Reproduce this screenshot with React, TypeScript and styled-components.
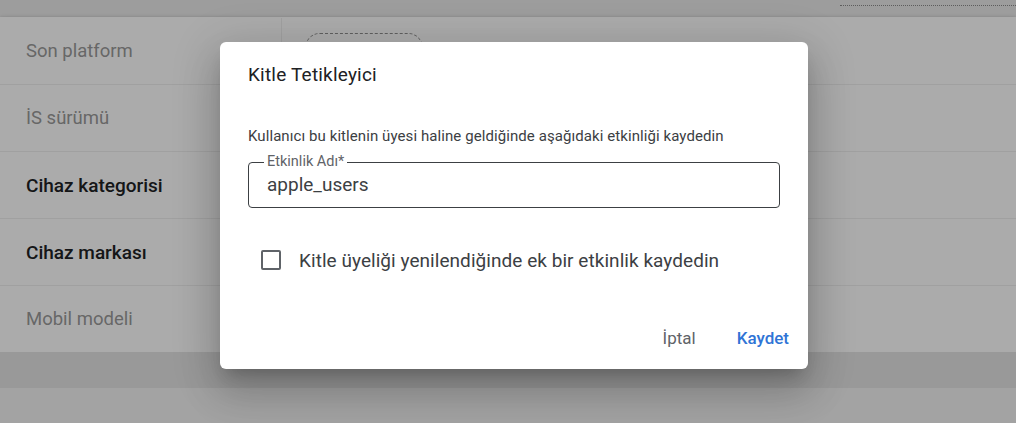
import * as React from 'react';
import styled, { createGlobalStyle } from 'styled-components';

const GlobalStyle = createGlobalStyle`
    html, body {
        margin: 0;
        padding: 0;
        width: 1016px;
        height: 423px;
        overflow: hidden;
        background: #f1f1f1;
        font-family: Roboto, "Noto Sans", Arial, sans-serif;
    }
`;

const Page = styled.div`
    position: relative;
    width: 1016px;
    height: 423px;
    display: flex;
    flex-direction: column;
`;

const TopBand = styled.div`
    height: 17px;
    background: #e8e8e8;
    display: flex;
    justify-content: flex-end;
`;

const DottedRule = styled.div`
    width: 176px;
    height: 5px;
    border-bottom: 1px dotted #8a8a8a;
`;

const Card = styled.div`
    background: #fdfdfd;
    box-shadow: 0 1px 3px rgba(0, 0, 0, 0.25), 0 2px 8px rgba(0, 0, 0, 0.12);
    display: flex;
    flex-direction: column;
`;

const Row = styled.div<{ $first?: boolean }>`
    display: grid;
    grid-template-columns: 282px 1fr;
    height: 67px;
    border-top: 1px solid ${p => (p.$first ? 'transparent' : '#ececec')};
    box-sizing: border-box;
`;

const LabelCell = styled.div<{ $strong?: boolean }>`
    display: flex;
    align-items: center;
    padding-left: 26px;
    border-right: 1px solid #ececec;
    font-size: ${p => (p.$strong ? '19px' : '18.5px')};
    font-weight: ${p => (p.$strong ? 500 : 400)};
    color: ${p => (p.$strong ? '#202124' : '#989898')};
`;

const ValueCell = styled.div`
    padding: 15px 0 0 23px;
`;

const DashedChip = styled.div`
    width: 118px;
    height: 30px;
    border: 1px dashed #8c8c8c;
    border-radius: 16px;
    box-sizing: border-box;
`;

const Gutter = styled.div`
    height: 36px;
    background: #e2e2e2;
`;

const LowerCard = styled.div`
    flex: 1;
    background: #f1f1f1;
`;

const Overlay = styled.div`
    position: absolute;
    inset: 0;
    background: rgba(0, 0, 0, 0.32);
    display: flex;
    justify-content: flex-start;
    align-items: flex-start;
    padding: 42px 0 0 220px;
    box-sizing: border-box;
`;

const Dialog = styled.div`
    width: 588px;
    height: 327px;
    background: #ffffff;
    border-radius: 6px;
    box-shadow: 0 11px 15px -7px rgba(0, 0, 0, 0.2), 0 24px 38px 3px rgba(0, 0, 0, 0.14),
        0 9px 46px 8px rgba(0, 0, 0, 0.12);
    box-sizing: border-box;
    padding: 21px 19px 0 28px;
    display: flex;
    flex-direction: column;
`;

const Title = styled.h2`
    margin: 0;
    font-size: 19px;
    font-weight: 400;
    line-height: 24px;
    color: #202124;
    letter-spacing: 0.2px;
`;

const Description = styled.p`
    margin: 40px 0 0;
    font-size: 15px;
    line-height: 18px;
    letter-spacing: 0.08px;
    color: #3c4043;
`;

const Field = styled.div`
    position: relative;
    margin: 17px 9px 0 0;
    padding: 0 18px;
    height: 46px;
    box-sizing: border-box;
    border: 1px solid #3c4043;
    border-radius: 4px;
    display: flex;
    align-items: center;
`;

const FloatLabel = styled.span`
    position: absolute;
    top: -9px;
    left: 15px;
    padding: 0 3px;
    background: #ffffff;
    font-size: 14.5px;
    line-height: 16px;
    color: #5f6368;
`;

const FieldInput = styled.input`
    border: none;
    outline: none;
    padding: 0;
    margin: 0;
    width: 100%;
    font-family: inherit;
    font-size: 19px;
    line-height: 24px;
    color: #3c4043;
    background: transparent;
`;

const CheckRow = styled.label`
    display: flex;
    align-items: center;
    gap: 18px;
    height: 24px;
    margin: 40px 0 0 13px;
    font-size: 19px;
    letter-spacing: 0.05px;
    color: #3c4043;
`;

const Box = styled.span`
    width: 20px;
    height: 20px;
    border: 2px solid #5f6368;
    border-radius: 2px;
    box-sizing: border-box;
`;

const Actions = styled.div`
    margin-top: 56px;
    height: 20px;
    display: flex;
    justify-content: flex-end;
    align-items: center;
    gap: 41px;
`;

const Action = styled.button<{ $primary?: boolean }>`
    border: none;
    background: none;
    padding: 0;
    font-family: inherit;
    font-size: 17px;
    line-height: 20px;
    font-weight: ${p => (p.$primary ? 500 : 400)};
    color: ${p => (p.$primary ? '#2f74d6' : '#5f6368')};
    cursor: pointer;
`;

const rows = [
    { label: 'Son platform', strong: false },
    { label: 'İS sürümü', strong: false },
    { label: 'Cihaz kategorisi', strong: true },
    { label: 'Cihaz markası', strong: true },
    { label: 'Mobil modeli', strong: false },
];

export default function App() {
    return (
        <Page>
            <GlobalStyle />
            <TopBand>
                <DottedRule />
            </TopBand>
            <Card>
                {rows.map((r, i) => (
                    <Row key={r.label} $first={i === 0}>
                        <LabelCell $strong={r.strong}>{r.label}</LabelCell>
                        <ValueCell>{i === 0 && <DashedChip />}</ValueCell>
                    </Row>
                ))}
            </Card>
            <Gutter />
            <LowerCard />
            <Overlay>
                <Dialog>
                    <Title>Kitle Tetikleyici</Title>
                    <Description>
                        Kullanıcı bu kitlenin üyesi haline geldiğinde aşağıdaki etkinliği kaydedin
                    </Description>
                    <Field>
                        <FloatLabel>Etkinlik Adı*</FloatLabel>
                        <FieldInput defaultValue="apple_users" />
                    </Field>
                    <CheckRow>
                        <Box />
                        Kitle üyeliği yenilendiğinde ek bir etkinlik kaydedin
                    </CheckRow>
                    <Actions>
                        <Action>İptal</Action>
                        <Action $primary>Kaydet</Action>
                    </Actions>
                </Dialog>
            </Overlay>
        </Page>
    );
}
